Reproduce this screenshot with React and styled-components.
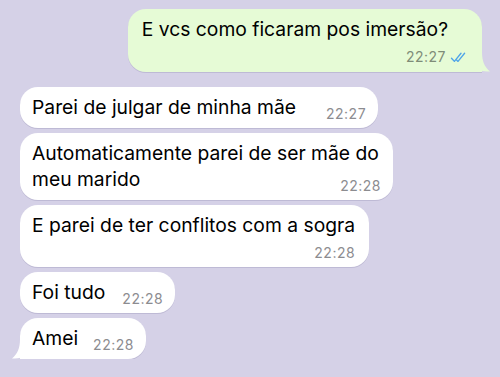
import styled, { createGlobalStyle } from "styled-components";

const GlobalStyle = createGlobalStyle`
	html, body {
		margin: 0;
		padding: 0;
		background: #d5d1e7;
	}
	body {
		font-family: Inter, "Noto Sans", "Liberation Sans", sans-serif;
		-webkit-font-smoothing: antialiased;
	}
`;

const messages = [
	{ id: 1, text: "Parei de julgar de minha mãe", time: "22:27", gap: 30 },
	{ id: 2, text: "Automaticamente parei de ser mãe do meu marido", time: "22:28" },
	{ id: 3, text: "E parei de ter conflitos com a sogra", time: "22:28", stacked: true },
	{ id: 4, text: "Foi tudo", time: "22:28" },
	{ id: 5, text: "Amei", time: "22:28", gap: 15, tail: true },
];

const Tail = ({ out }) => (
	<TailSvg $out={out} width="20" height="20" viewBox="0 0 20 20">
		<path d="M8 0 C8 9 5.5 15 0 19.4 C5 20 10 19 13 16.8 C15 18.6 17 20 20 20 L20 0 Z" />
	</TailSvg>
);

const DoubleCheck = () => (
	<svg width="19" height="11" viewBox="0 0 19 11" fill="none">
		<g stroke="#4ea4e9" strokeWidth="1.35" strokeLinecap="round" strokeLinejoin="round">
			<path d="M1.5 6.2 L4.4 9.4 L11 1.3" />
			<path d="M6.6 8 L8 9.4 L14.6 1.3" />
		</g>
	</svg>
);

const App = () => {
	return (
		<>
			<GlobalStyle />
			<Chat>
				<Bubble $out $stacked $tail>
					<Text>E vcs como ficaram pos imersão?</Text>
					<Meta $out $stacked>
						22:27
						<DoubleCheck />
					</Meta>
					<Tail out />
				</Bubble>
				<Incoming>
					{messages.map((msg) => (
						<Bubble key={msg.id} $stacked={msg.stacked} $tail={msg.tail}>
							<Text>{msg.text}</Text>
							<Meta $stacked={msg.stacked} $gap={msg.gap}>
								{msg.time}
							</Meta>
							{msg.tail && <Tail />}
						</Bubble>
					))}
				</Incoming>
			</Chat>
		</>
	);
};

export default App;

const Chat = styled.div`
	display: flex;
	flex-direction: column;
	padding: 9px 18px 0 20px;
	gap: 15px;
`;

const Incoming = styled.div`
	display: flex;
	flex-direction: column;
	align-items: flex-start;
	gap: 5px;
`;

const Bubble = styled.div`
	position: relative;
	align-self: ${({ $out }) => ($out ? "flex-end" : "flex-start")};
	display: flow-root;
	max-width: 373px;
	box-sizing: border-box;
	padding: ${({ $out, $stacked }) =>
		$out ? "7px 34px 7px 14px" : $stacked ? "7px 14px 6px 12px" : "7px 12px 6px 12px"};
	border-radius: 18px;
	${({ $tail, $out }) =>
		$tail && ($out ? "border-bottom-right-radius: 0;" : "border-bottom-left-radius: 0;")}
	background: ${({ $out }) => ($out ? "#e6fbd6" : "#ffffff")};
	box-shadow: 0 1px 0.5px rgba(40, 30, 90, 0.13);
	color: #000;
	font-size: 19.3px;
	line-height: 26px;
`;

const Text = styled.span``;

const Meta = styled.span`
	display: ${({ $stacked }) => ($stacked ? "flex" : "block")};
	float: ${({ $stacked }) => ($stacked ? "none" : "right")};
	justify-content: flex-end;
	align-items: center;
	gap: 4px;
	margin: ${({ $stacked, $out, $gap = 17 }) =>
		$stacked ? ($out ? "7px -21px 0 0" : "7px 0 0 0") : `12px 0 0 ${$gap}px`};
	font-size: 14px;
	line-height: 16px;
	letter-spacing: 0.5px;
	color: ${({ $out }) => ($out ? "#7f8c78" : "#8c8c90")};
`;

const TailSvg = styled.svg`
	position: absolute;
	bottom: 0;
	${({ $out }) => ($out ? "right: -8px; transform: scaleX(-1);" : "left: -8px;")}
	fill: ${({ $out }) => ($out ? "#e6fbd6" : "#ffffff")};
`;
